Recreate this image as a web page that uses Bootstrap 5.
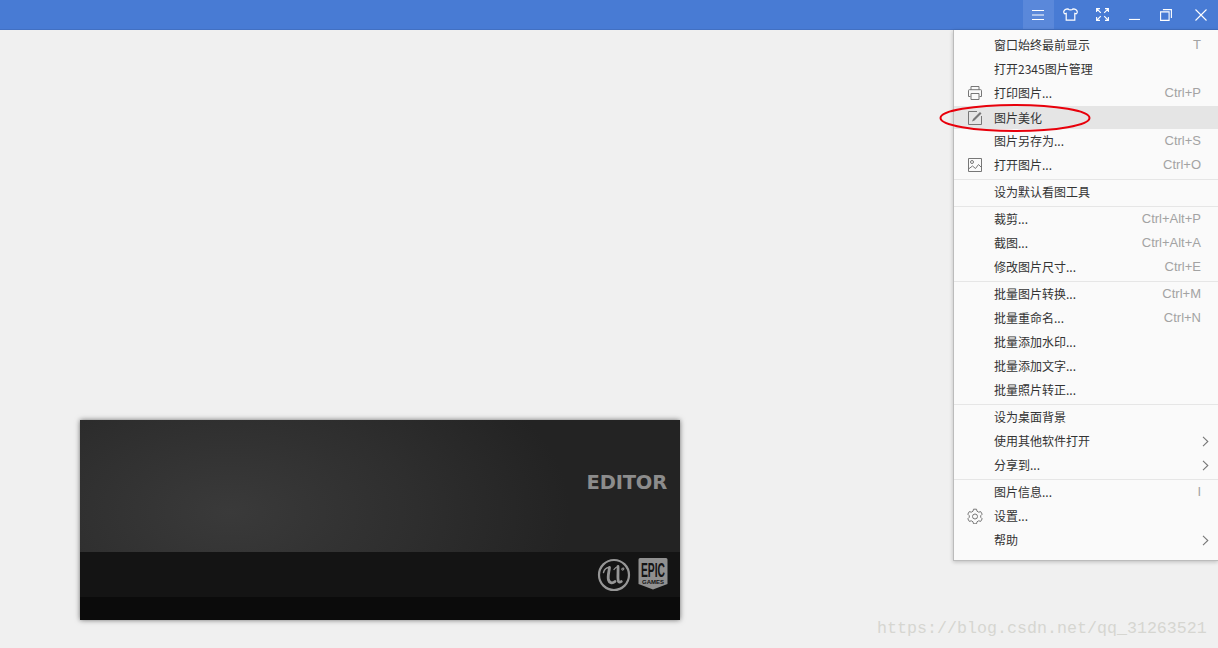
<!DOCTYPE html>
<html lang="zh">
<head>
<meta charset="utf-8">
<title>看图</title>
<link href="https://cdn.jsdelivr.net/npm/bootstrap@5.3.0/dist/css/bootstrap.min.css" rel="stylesheet">
<style>
html,body{height:648px;overflow:hidden;background:#f0f0f0;font-family:"Noto Sans CJK SC","Liberation Sans",sans-serif}
.topbar{height:30px;background:#487bd4;border-bottom:1px solid #4270c2}
.topbtn{width:32px;height:29px;color:#fff}
.topbtn svg{margin-right:2px}
.topbtn.active-btn{background:#5a88da;width:31px;margin-right:1px}
.topbtn.close-btn{width:35px}
.topbtn.close-btn svg{margin-right:0}
.stage{height:618px;padding:390px 0 0 80px}
.splash{width:600px;height:200px;box-shadow:0 0 5px rgba(0,0,0,.55);background:#0b0b0b}
.splash-top{height:132px;background:radial-gradient(ellipse 340px 190px at 150px 92px,#3a3a3a 0%,#2e2e2e 55%,#232323 100%);padding-top:51px;padding-right:13px;color:#8c8c8c;font:700 19.500px/24px "DejaVu Sans",sans-serif;letter-spacing:-.2px}
.splash-mid{height:45px;background:#141414;padding-right:12px;gap:7px}
.viewer-menu{top:30px;right:0;left:auto;width:265px;height:531px;margin:0;padding:3px 0 8px;background:#fafafa;border:0;border-left:1px solid #bcbcbc;border-bottom:1px solid #bcbcbc;border-radius:0;box-shadow:0 1px 4px rgba(0,0,0,.22);font-size:12px;color:#333}
.viewer-menu .dropdown-item{position:relative;height:24px;padding:0 17px 0 13px;font-size:12px;line-height:24px;color:#333;display:flex;align-items:center}
.viewer-menu .dropdown-item.hl{background:#e5e5e5;height:23px;margin-top:1px}
.viewer-menu .dropdown-divider{margin:2px 0 0;border-color:#e6e6e6;opacity:1}
.ico{width:16px;height:16px;margin-right:11px;flex:none;color:#777}
.keys{margin-left:auto;color:#a3a3a3;font-size:13px;font-family:"Liberation Sans",sans-serif}
.chev{position:absolute;right:9px;color:#777}
.ring{position:absolute;left:939px;top:103px;pointer-events:none;z-index:1050}
.mark-url{position:absolute;left:877px;top:617px;color:#d6d6d1;font:16.670px/24px "Liberation Mono",monospace;white-space:nowrap}
</style>
</head>
<body>
<header class="topbar d-flex justify-content-end">
  <div class="topbtn active-btn d-flex align-items-center justify-content-center"><svg width="12" height="10" viewBox="0 0 12 10" stroke="currentColor"><path d="M0 .5h12M0 5h12M0 9.500h12"/></svg></div>
  <div class="topbtn d-flex align-items-center justify-content-center"><svg width="15" height="13" viewBox="0 0 15 13" fill="none" stroke="currentColor" stroke-width="1.200"><path d="M5 .8C6 2.300 9 2.300 10 .8c2.200.2 4 1.200 4.300 3 0 .9-.5 1.700-1 2l-1.500-.4v6.800H3.200V5.400l-1.500.4c-.5-.3-1-1.100-1-2C1 2 2.800 1 5 .8z"/></svg></div>
  <div class="topbtn d-flex align-items-center justify-content-center"><svg width="13" height="13" viewBox="0 0 13 13" fill="none" stroke="currentColor" stroke-width="1.100"><path d="M1 1l3.800 3.800M12 1L8.200 4.800M1 12l3.800-3.800M12 12L8.200 8.200M.6 4V.6H4M9 .6h3.400V4M.6 9v3.400H4M9 12.400h3.400V9"/></svg></div>
  <div class="topbtn d-flex align-items-center justify-content-center"><svg width="11" height="11" viewBox="0 0 11 11" stroke="currentColor" stroke-width="1.200"><path d="M0 10.500h11"/></svg></div>
  <div class="topbtn d-flex align-items-center justify-content-center"><svg width="12" height="12" viewBox="0 0 12 12" fill="none" stroke="currentColor" stroke-width="1.100"><path d="M.6 2.900h8.500v8.500H.6zM2.900.6h8.500v8.500"/></svg></div>
  <div class="topbtn close-btn d-flex align-items-center justify-content-center"><svg width="12" height="12" viewBox="0 0 12 12" stroke="currentColor" stroke-width="1.100"><path d="M.5.500l11 11M11.500.500l-11 11"/></svg></div>
</header>

<main class="stage">
  <section class="splash">
    <div class="splash-top text-end">EDITOR</div>
    <div class="splash-mid d-flex justify-content-end align-items-center">
      <svg width="34" height="34" viewBox="0 0 34 34"><circle cx="17" cy="17" r="15" fill="none" stroke="#969696" stroke-width="2.200"/><g fill="none" stroke="#969696" stroke-linecap="round"><path d="M6.500 14.500C7.500 10.500 10 9.500 12.500 9.500" stroke-width="1.400"/><path d="M12.500 9.500C12 14 10.500 18 11.500 22c.7 2.500 3.500 4 6.500 1.500" stroke-width="2.800"/><path d="M21 8.500c.4 5-.6 10.500.3 14.500.3 1.300 1.500 1.700 3 .5" stroke-width="2.800"/><path d="M17 11.500c1-1.500 2.500-2.500 4-3" stroke-width="1.300"/><path d="M25 10.500c1-1 2.200-.5 1.800.7-.3.900-1.500 1.300-2 .4" stroke-width="1.100"/></g></svg>
      <svg width="30" height="33" viewBox="0 0 30 33"><path d="M2 0h26a1.500 1.500 0 0 1 1.500 1.500V26L15 31.500.5 26V1.500A1.500 1.500 0 0 1 2 0z" fill="#909090"/><text x="15" y="19" text-anchor="middle" font-family="Liberation Sans" font-weight="700" font-size="21" textLength="24" lengthAdjust="spacingAndGlyphs" fill="#141414">EPIC</text><text x="15" y="25.500" text-anchor="middle" font-family="Liberation Sans" font-weight="700" font-size="5.500" textLength="22" lengthAdjust="spacingAndGlyphs" fill="#141414">GAMES</text></svg>
    </div>
  </section>
</main>

<nav class="dropdown-menu show position-absolute viewer-menu">
  <div class="dropdown-item"><span class="ico"></span>窗口始终最前显示<span class="keys">T</span></div>
  <div class="dropdown-item"><span class="ico"></span>打开2345图片管理</div>
  <div class="dropdown-item"><svg class="ico" viewBox="0 0 16 16" fill="none" stroke="currentColor"><path d="M4 5V1.500h8V5M3.500 11.500H1.500V5.500a.8.8 0 0 1 .8-.8h11.400a.8.8 0 0 1 .8.8v6h-2M4 8.500h8v6H4z"/></svg>打印图片...<span class="keys">Ctrl+P</span></div>
  <div class="dropdown-item hl"><svg class="ico" viewBox="0 0 16 16" fill="none" stroke="currentColor"><path d="M10 1.500H1.500v13h13V6"/><path d="M5 11.500l1-2.500 7-7 1.500 1.500-7 7z" fill="currentColor" stroke="none"/></svg>图片美化</div>
  <div class="dropdown-item"><span class="ico"></span>图片另存为...<span class="keys">Ctrl+S</span></div>
  <div class="dropdown-item"><svg class="ico" viewBox="0 0 16 16" fill="none" stroke="currentColor"><path d="M1.500 1.500h13v13h-13z"/><circle cx="5" cy="5" r="1.500"/><path d="M1.500 12l4-3 3 2.500 3-4 3 3"/></svg>打开图片...<span class="keys">Ctrl+O</span></div>
  <hr class="dropdown-divider">
  <div class="dropdown-item"><span class="ico"></span>设为默认看图工具</div>
  <hr class="dropdown-divider">
  <div class="dropdown-item"><span class="ico"></span>裁剪...<span class="keys">Ctrl+Alt+P</span></div>
  <div class="dropdown-item"><span class="ico"></span>截图...<span class="keys">Ctrl+Alt+A</span></div>
  <div class="dropdown-item"><span class="ico"></span>修改图片尺寸...<span class="keys">Ctrl+E</span></div>
  <hr class="dropdown-divider">
  <div class="dropdown-item"><span class="ico"></span>批量图片转换...<span class="keys">Ctrl+M</span></div>
  <div class="dropdown-item"><span class="ico"></span>批量重命名...<span class="keys">Ctrl+N</span></div>
  <div class="dropdown-item"><span class="ico"></span>批量添加水印...</div>
  <div class="dropdown-item"><span class="ico"></span>批量添加文字...</div>
  <div class="dropdown-item"><span class="ico"></span>批量照片转正...</div>
  <hr class="dropdown-divider">
  <div class="dropdown-item"><span class="ico"></span>设为桌面背景</div>
  <div class="dropdown-item"><span class="ico"></span>使用其他软件打开<svg class="chev" width="7" height="11" viewBox="0 0 7 11" fill="none" stroke="currentColor" stroke-width="1.100"><path d="M1 .8l4.800 4.700L1 10.200"/></svg></div>
  <div class="dropdown-item"><span class="ico"></span>分享到...<svg class="chev" width="7" height="11" viewBox="0 0 7 11" fill="none" stroke="currentColor" stroke-width="1.100"><path d="M1 .8l4.800 4.700L1 10.200"/></svg></div>
  <hr class="dropdown-divider">
  <div class="dropdown-item"><span class="ico"></span>图片信息...<span class="keys">I</span></div>
  <div class="dropdown-item"><svg class="ico" viewBox="0 0 16 16" fill="none" stroke="currentColor"><path d="M6.500 1.200h3l.5 2 1.700 1 2-.6 1.500 2.600-1.500 1.500v1.600l1.500 1.500-1.500 2.600-2-.6-1.700 1-.5 2h-3l-.5-2-1.700-1-2 .6L.8 10.800l1.500-1.500V7.700L.8 6.200l1.500-2.600 2 .6 1.700-1z"/><circle cx="8" cy="8.500" r="2.500"/></svg>设置...</div>
  <div class="dropdown-item"><span class="ico"></span>帮助<svg class="chev" width="7" height="11" viewBox="0 0 7 11" fill="none" stroke="currentColor" stroke-width="1.100"><path d="M1 .8l4.800 4.700L1 10.200"/></svg></div>
</nav>

<svg class="ring" width="152" height="30" viewBox="0 0 152 30"><ellipse cx="76" cy="15" rx="74.500" ry="13" fill="none" stroke="#e8000b" stroke-width="2"/></svg>
<div class="mark-url">https://blog.csdn.net/qq_31263521</div>
</body>
</html>
